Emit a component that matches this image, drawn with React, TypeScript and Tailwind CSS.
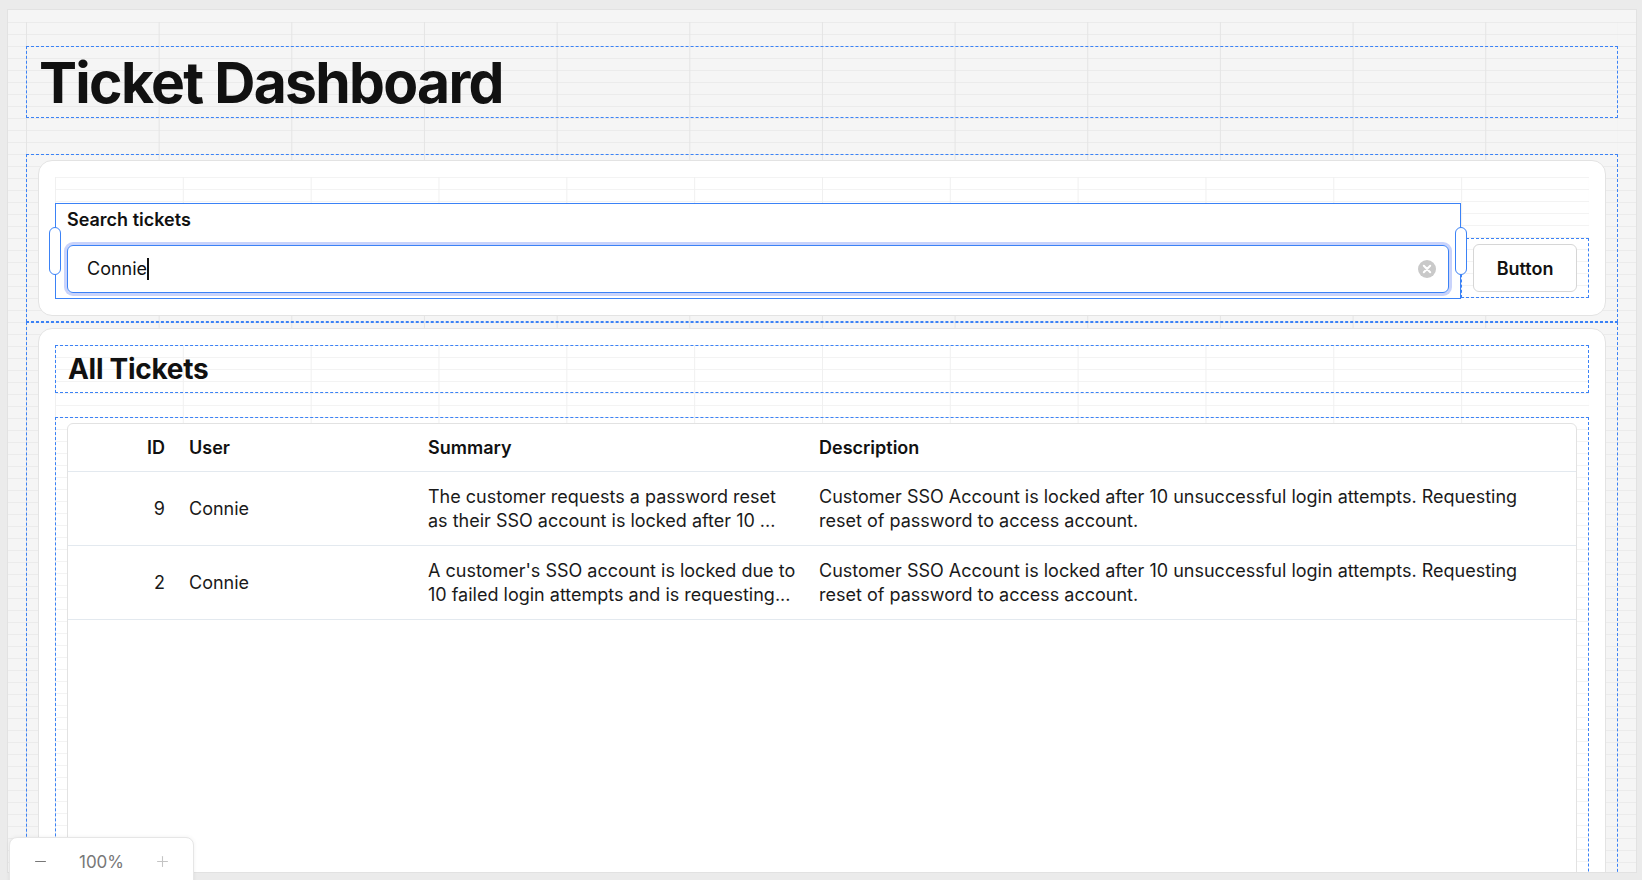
import React from 'react';
import { Minus, Plus } from 'lucide-react';

const tickets = [
  {
    id: 9,
    user: 'Connie',
    summary: 'The customer requests a password reset as their SSO account is locked after 10 ...',
    description:
      'Customer SSO Account is locked after 10 unsuccessful login attempts. Requesting reset of password to access account.',
  },
  {
    id: 2,
    user: 'Connie',
    summary: "A customer's SSO account is locked due to 10 failed login attempts and is requesting...",
    description:
      'Customer SSO Account is locked after 10 unsuccessful login attempts. Requesting reset of password to access account.',
  },
];

function ClearIcon() {
  return (
    <svg width="18" height="18" viewBox="0 0 18 18">
      <circle cx="9" cy="9" r="9" fill="#c9c9c9" />
      <path d="M5.8 5.8 12.2 12.2M12.2 5.8 5.8 12.2" stroke="#fff" strokeWidth="2" strokeLinecap="round" />
    </svg>
  );
}

function Handle({ side }: { side: 'left' | 'right' }) {
  return (
    <div
      className={`absolute top-1/2 -translate-y-1/2 w-[12px] h-[48px] rounded-full bg-white border border-[#3b82f6] ${
        side === 'left' ? 'left-[-7px]' : 'right-[-7px]'
      }`}
    />
  );
}

export default function App() {
  return (
    <div className="relative w-[1642px] h-[880px] overflow-hidden bg-[#ebebeb] pt-[9px] pl-[7px] font-['Inter',sans-serif] text-[#111]">
      <div className="w-[1630px] h-[864px] overflow-hidden bg-[#f5f5f5] border border-[#e2e2e2] pt-[12px]">
        <div className="h-full bg-[linear-gradient(to_bottom,#ebebeb_1px,transparent_1px)] bg-[size:100%_12px]">
          <div className="mx-[18px] h-full bg-[linear-gradient(to_right,#e4e4e4_1px,transparent_1px)] bg-[size:calc(100%/12)_100%]">
            {/* page title */}
            <div className="pt-[24px]">
              <div className="h-[72px] border border-dashed border-[#3b82f6] px-[12px] flex items-center">
                <h1 className="text-[57px] font-bold leading-none tracking-[-0.03em]">Ticket Dashboard</h1>
              </div>
            </div>

            {/* search card */}
            <div className="mt-[36px] h-[168px] border border-dashed border-[#3b82f6] px-[11px] py-[5px]">
              <div className="h-full rounded-[14px] border border-[#e3e3e3] bg-white p-4">
                <div className="h-full pt-[24px] grid grid-cols-12 items-end bg-[linear-gradient(to_right,#f0f0f0_1px,transparent_1px),linear-gradient(to_bottom,#f3f3f3_1px,transparent_1px)] bg-[size:calc(100%/12)_100%,100%_12px]">
                  <div className="col-span-11 relative h-[96px] bg-white border border-[#3b82f6] px-[11px] pt-[4px] flex flex-col">
                    <Handle side="left" />
                    <Handle side="right" />
                    <label className="text-[18px] font-semibold leading-6">Search tickets</label>
                    <div className="mt-[13px] h-[48px] rounded-[6px] border border-[#3b82f6] ring-[3px] ring-[#c9d3fb] flex items-center pl-[19px] pr-[12px]">
                      <span className="text-[18px] leading-6 text-[#111]">Connie</span>
                      <span className="w-[1.5px] h-[22px] bg-[#111]" />
                      <div className="ml-auto flex items-center">
                        <ClearIcon />
                      </div>
                    </div>
                  </div>
                  <div className="col-span-1 h-[60px] mb-[1px] border border-dashed border-[#3b82f6] px-[11px] pt-[5px]">
                    <button className="w-full h-[48px] rounded-[6px] border border-[#d6d6d6] bg-white text-[18px] font-semibold">
                      Button
                    </button>
                  </div>
                </div>
              </div>
            </div>

            {/* tickets card */}
            <div className="h-[600px] border border-dashed border-[#3b82f6] px-[11px] pt-[5px]">
              <div className="h-full rounded-[14px] border border-[#e3e3e3] bg-white p-4">
                <div className="h-full bg-[linear-gradient(to_right,#f0f0f0_1px,transparent_1px),linear-gradient(to_bottom,#f3f3f3_1px,transparent_1px)] bg-[size:calc(100%/12)_100%,100%_12px]">
                  <div className="h-[48px] border border-dashed border-[#3b82f6] px-[12px] flex items-center">
                    <h2 className="text-[28px] font-bold leading-none tracking-[-0.01em]">All Tickets</h2>
                  </div>
                  <div className="mt-[24px] h-[600px] border border-dashed border-[#3b82f6] px-[11px] pt-[5px]">
                    <div className="h-full rounded-[6px] border border-[#e2e2e2] bg-white text-[18px] leading-6">
                      <div className="grid grid-cols-[109px_239px_391px_1fr] h-[48px] items-center border-b border-[#e3e9ef] font-semibold">
                        <div className="text-right px-3">ID</div>
                        <div className="px-3">User</div>
                        <div className="px-3">Summary</div>
                        <div className="px-3">Description</div>
                      </div>
                      {tickets.map(t => (
                        <div
                          key={t.id}
                          className="grid grid-cols-[109px_239px_391px_1fr] h-[74px] items-center border-b border-[#e3e9ef] text-[#1a1a1a]"
                        >
                          <div className="text-right px-3">{t.id}</div>
                          <div className="px-3">{t.user}</div>
                          <div className="pl-3 pr-2 line-clamp-2">{t.summary}</div>
                          <div className="pl-3 pr-[24px]">{t.description}</div>
                        </div>
                      ))}
                    </div>
                  </div>
                </div>
              </div>
            </div>
          </div>
        </div>
      </div>

      {/* zoom control */}
      <div className="absolute left-[9px] top-[837px] w-[185px] h-[50px] rounded-t-[8px] border border-[#e6e6e6] bg-white shadow-[0_0_4px_rgba(0,0,0,0.06)] flex items-start pt-[12px] px-[22px] justify-between text-[17px] text-[#777]">
        <Minus className="w-[17px] h-[17px] mt-[3px]" strokeWidth={1.5} />
        <span className="leading-6">100%</span>
        <Plus className="w-[17px] h-[17px] mt-[3px] text-[#c4c4c4]" strokeWidth={1.5} />
      </div>
    </div>
  );
}
